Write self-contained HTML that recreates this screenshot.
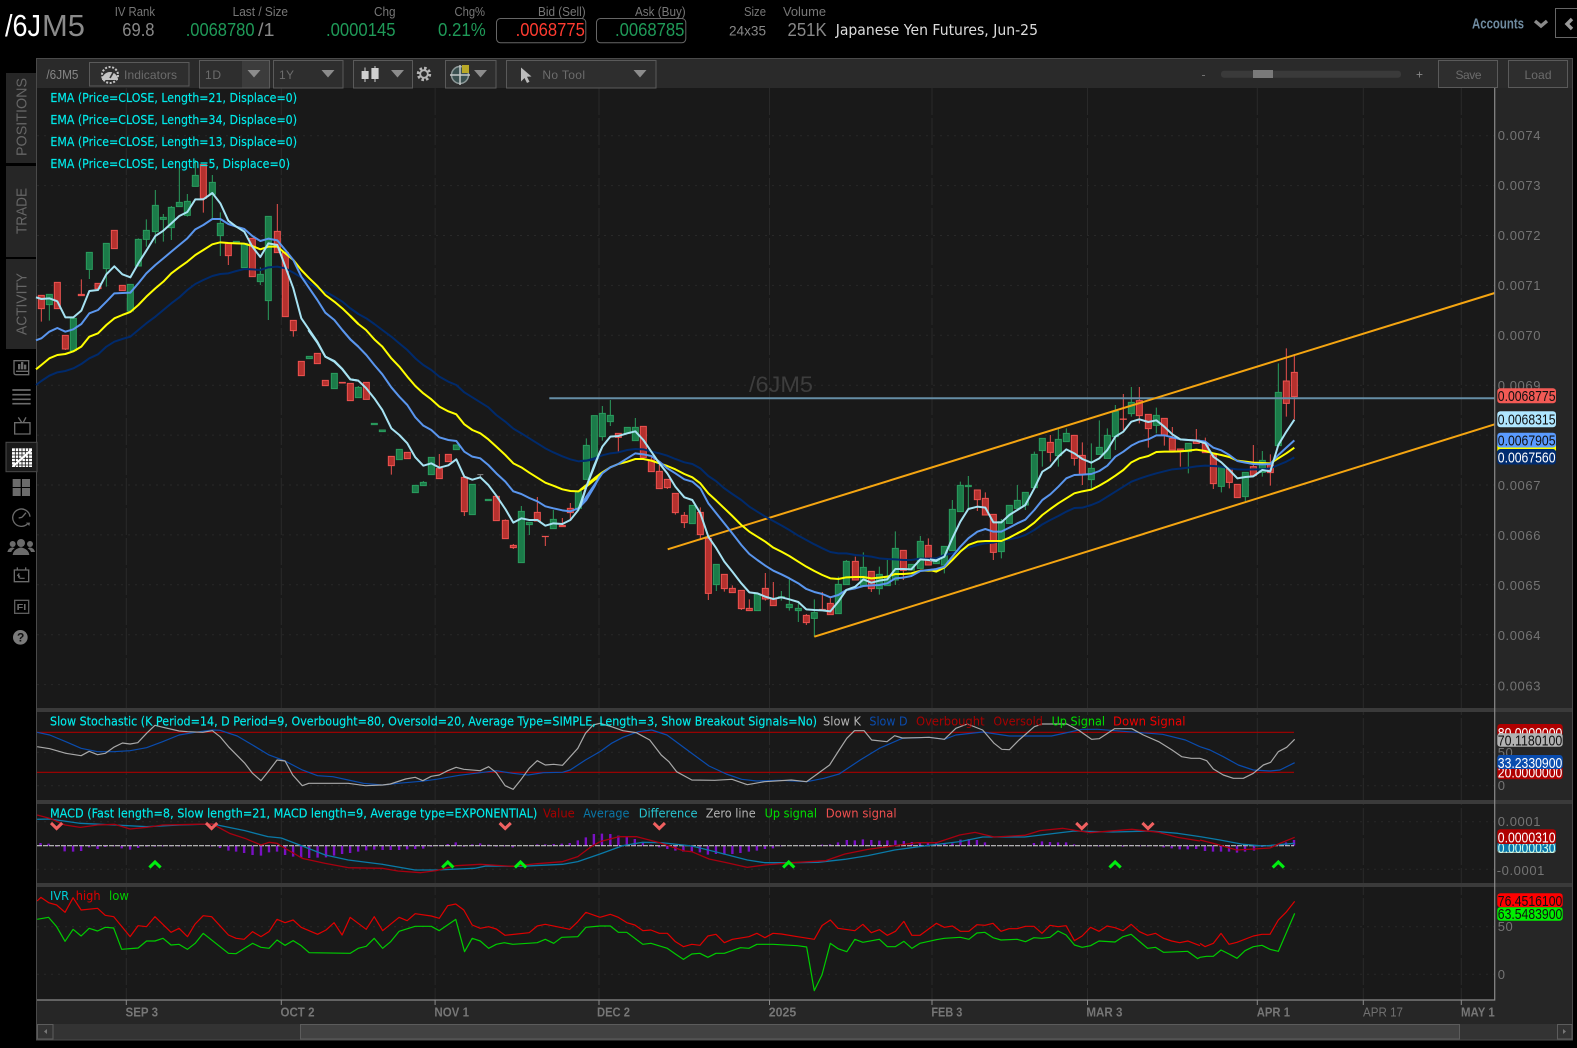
<!DOCTYPE html>
<html><head><meta charset="utf-8"><title>/6JM5</title>
<style>
html,body{margin:0;padding:0;background:#000;width:1577px;height:1048px;overflow:hidden}
svg{display:block;font-family:"Liberation Sans",sans-serif}
.g{fill:#1b7b49;stroke:#2a9c5e;stroke-width:3}
.r{fill:#b5312e;stroke:#ee5350;stroke-width:3}
.wg{fill:none;stroke:#2a9c5e;stroke-width:3}
.wr{fill:none;stroke:#e8504c;stroke-width:3}
.e5,.e13,.e21,.e34{fill:none;stroke-width:6;stroke-linejoin:round}
.e5{stroke:#a6e2f2}.e13{stroke:#5a96ee}.e21{stroke:#ffff00}.e34{stroke:#002a6c}
.n{fill:none;vector-effect:non-scaling-stroke;stroke-linejoin:round}
.leg{font-family:"DejaVu Sans",sans-serif;font-size:12.5px;fill:#00ecec}
.lab{font-size:12.5px;fill:#777}
.val{font-size:18px;fill:#888}
.ax{font-size:13px;fill:#747474}
.tag{font-size:15px}
.dt{font-size:13px;font-weight:bold;fill:#767676}
.ic{fill:none;stroke:#6b6b6b;stroke-width:4}
.tb{font-size:12px;fill:#6c6c6c}
.gh{stroke:#292929;stroke-width:1;stroke-dasharray:2 5;fill:none}
.gv{stroke:#292929;stroke-width:1;stroke-dasharray:27 3;fill:none}
</style></head><body>
<svg width="1577" height="1048" viewBox="0 0 1577 1048" xmlns="http://www.w3.org/2000/svg">
<rect width="1577" height="1048" fill="#000"/>

<!-- header -->
<text x="5" y="36" font-size="31" fill="#fff" textLength="36" lengthAdjust="spacingAndGlyphs">/6J</text>
<text x="42" y="36" font-size="31" fill="#8a8a8a" textLength="43" lengthAdjust="spacingAndGlyphs">M5</text>
<text class="lab" x="114.7" y="16" textLength="40.3" lengthAdjust="spacingAndGlyphs">IV Rank</text>
<text class="val" x="122.3" y="36" textLength="32.2" lengthAdjust="spacingAndGlyphs">69.8</text>
<text class="lab" x="232.6" y="16" textLength="55.4" lengthAdjust="spacingAndGlyphs">Last / Size</text>
<text class="val" x="185.7" y="36" textLength="68.8" lengthAdjust="spacingAndGlyphs" style="fill:#1f9a58">.0068780</text>
<text class="val" x="258" y="36" textLength="16.5" lengthAdjust="spacingAndGlyphs">/1</text>
<text class="lab" x="374" y="16" textLength="21.5" lengthAdjust="spacingAndGlyphs">Chg</text>
<text class="val" x="326" y="36" textLength="69.5" lengthAdjust="spacingAndGlyphs" style="fill:#1f9a58">.0000145</text>
<text class="lab" x="454.5" y="16" textLength="30.5" lengthAdjust="spacingAndGlyphs">Chg%</text>
<text class="val" x="438" y="36" textLength="47.7" lengthAdjust="spacingAndGlyphs" style="fill:#1f9a58">0.21%</text>
<text class="lab" x="538" y="16" textLength="47.7" lengthAdjust="spacingAndGlyphs">Bid (Sell)</text>
<rect x="496.5" y="18.5" width="89.3" height="24.3" rx="4" fill="#000" stroke="#666"/>
<text class="val" x="515.6" y="36" textLength="69.2" lengthAdjust="spacingAndGlyphs" style="fill:#ff3b30">.0068775</text>
<text class="lab" x="635" y="16" textLength="50.7" lengthAdjust="spacingAndGlyphs">Ask (Buy)</text>
<rect x="596.5" y="18.5" width="89.3" height="24.3" rx="4" fill="#000" stroke="#666"/>
<text class="val" x="615" y="36" textLength="69.4" lengthAdjust="spacingAndGlyphs" style="fill:#1f9a58">.0068785</text>
<text class="lab" x="744" y="16" textLength="22" lengthAdjust="spacingAndGlyphs">Size</text>
<text x="729" y="35.5" font-size="14" fill="#888" textLength="37" lengthAdjust="spacingAndGlyphs">24x35</text>
<text class="lab" x="783" y="16" textLength="43" lengthAdjust="spacingAndGlyphs">Volume</text>
<text class="val" x="787.5" y="36" textLength="39.2" lengthAdjust="spacingAndGlyphs">251K</text>
<text x="835.7" y="35" font-size="15" fill="#ddd" style="font-family:'DejaVu Sans',sans-serif" textLength="202.3" lengthAdjust="spacingAndGlyphs">Japanese Yen Futures, Jun-25</text>
<text x="1472" y="28.5" font-size="15" font-weight="bold" fill="#6f8ba0" textLength="52" lengthAdjust="spacingAndGlyphs">Accounts</text>
<path d="M1535 21l6 5 6-5" fill="none" stroke="#8a8a8a" stroke-width="3.4"/>
<rect x="1555.5" y="8.5" width="30" height="29" fill="none" stroke="#666"/>
<path d="M1572 19l-5 5 5 5" fill="none" stroke="#9a9a9a" stroke-width="3.4"/>

<!-- sidebar tabs -->
<rect x="6" y="73" width="31" height="90" fill="#262626"/>
<rect x="6" y="166" width="31" height="91" fill="#262626"/>
<rect x="6" y="259" width="31" height="90" fill="#262626"/>
<text transform="translate(26.5 156) rotate(-90)" font-size="15" fill="#666" textLength="78" lengthAdjust="spacingAndGlyphs">POSITIONS</text>
<text transform="translate(26.5 234) rotate(-90)" font-size="15" fill="#666" textLength="46" lengthAdjust="spacingAndGlyphs">TRADE</text>
<text transform="translate(26.5 335) rotate(-90)" font-size="15" fill="#666" textLength="62" lengthAdjust="spacingAndGlyphs">ACTIVITY</text>

<!-- frame -->
<rect x="36.5" y="58.5" width="1536" height="981.5" fill="#262626" stroke="#4a4a4a"/>
<rect x="37" y="59" width="1535" height="29" fill="#2a2a2a"/>
<rect x="37" y="88" width="1457.7" height="912" fill="#191919"/>

<!-- grid -->
<path class="gh" d="M37 135.7H1494M37 185.6H1494M37 235.5H1494M37 285.4H1494M37 335.3H1494M37 385.2H1494M37 435.1H1494M37 485H1494M37 534.9H1494M37 584.8H1494M37 634.7H1494M37 684.6H1494M37 752.3H1494M37 785.7H1494M37 821.7H1494M37 869.3H1494M37 926.7H1494M37 974.3H1494"/>
<path class="gv" d="M126.3 88V1000M281.3 88V1000M435.1 88V1000M599 88V1000M769.5 88V1000M932 88V1000M1087.5 88V1000M1257.3 88V1000M1363.3 88V1000M1461.3 88V1000"/>

<!-- toolbar -->
<text x="46.4" y="79" font-size="12.5" fill="#868686" textLength="32" lengthAdjust="spacingAndGlyphs">/6JM5</text>
<rect x="89.5" y="62.5" width="99.5" height="23.5" fill="#2e2e2e" stroke="#5a5a5a"/>
<path d="M102 80a8 8 0 1 1 16 0z" fill="#c4c4c4"/>
<circle cx="110" cy="75" r="8" fill="none" stroke="#c4c4c4" stroke-width="2" stroke-dasharray="2 1.6"/>
<path d="M110 78l4-7" stroke="#333" stroke-width="1.6"/>
<text class="tb" x="124" y="79" textLength="53" lengthAdjust="spacing">Indicators</text>
<rect x="199.5" y="60.5" width="70" height="27.5" fill="#2e2e2e" stroke="#5a5a5a"/>
<rect x="242" y="61" width="27" height="26.5" fill="#3c3c3c"/>
<text class="tb" x="205" y="79" textLength="16" lengthAdjust="spacing">1D</text>
<path d="M247.5 70h13l-6.5 7.5z" fill="#8c8c8c"/>
<rect x="273.5" y="60.5" width="69.5" height="27.5" fill="#2e2e2e" stroke="#5a5a5a"/>
<text class="tb" x="279" y="79" textLength="15" lengthAdjust="spacing">1Y</text>
<path d="M321.5 70h13l-6.5 7.5z" fill="#8c8c8c"/>
<rect x="353.5" y="60.5" width="59" height="27.5" fill="#2e2e2e" stroke="#5a5a5a"/>
<path d="M365 67.500V82M375 66V82" stroke="#cfcfcf" stroke-width="1"/>
<path d="M361.600 71h7v8h-7zM371.400 68h7.200v11h-7.200z" fill="#cfcfcf"/>
<path d="M391 70h13l-6.5 7.5z" fill="#8c8c8c"/>
<circle cx="424" cy="74" r="5.5" fill="none" stroke="#b4b4b4" stroke-width="3.4" stroke-dasharray="2.4 1.9"/>
<circle cx="424" cy="74" r="3.8" fill="none" stroke="#b4b4b4" stroke-width="1.8"/>
<rect x="445.5" y="60.5" width="50.5" height="27.5" fill="#2e2e2e" stroke="#5a5a5a"/>
<circle cx="460" cy="75" r="8.5" fill="#3a5050" stroke="#8f9a9a" stroke-width="1.5"/>
<path d="M450 75h20M460 65v20" stroke="#c2c8c8" stroke-width="1.5"/>
<rect x="462" y="65" width="7" height="8" fill="#b8a828"/>
<path d="M474 70h13l-6.5 7.5z" fill="#8c8c8c"/>
<rect x="506.5" y="60.5" width="149.5" height="27.5" fill="#2e2e2e" stroke="#5a5a5a"/>
<path d="M521 67.5l0 14 3.5-3.500 2.500 5 2.500-1.200-2.500-5 4.500-.3z" fill="#bbb"/>
<text class="tb" x="542.4" y="79" textLength="42.6" lengthAdjust="spacing">No Tool</text>
<path d="M633.5 70h13l-6.5 7.5z" fill="#8c8c8c"/>
<text x="1201.5" y="78.5" font-size="12" fill="#777">-</text>
<rect x="1221" y="70.7" width="180" height="7" rx="3" fill="#3a3a3a"/>
<rect x="1253" y="70" width="20" height="8" fill="#7a7a7a"/>
<text x="1416" y="78.5" font-size="12" fill="#888">+</text>
<rect x="1438.5" y="60.5" width="59" height="27" fill="#2e2e2e" stroke="#5a5a5a"/>
<text class="tb" x="1455.5" y="79" textLength="26" lengthAdjust="spacing">Save</text>
<rect x="1508.5" y="60.5" width="59" height="27" fill="#2e2e2e" stroke="#5a5a5a"/>
<text class="tb" x="1524.5" y="79" textLength="27" lengthAdjust="spacing">Load</text>

<!-- watermark -->
<text x="749" y="392" font-size="22" fill="#3d3d3d" textLength="64" lengthAdjust="spacingAndGlyphs">/6JM5</text>

<!-- candles A -->
<g transform="translate(36 160) scale(.33333)">
<path class="wg" d="M40 403V482M160 328V357M211 326V380M307 235V238M331 178V260M358 90V250M382 162V245M406 138V240M430 20V127M454 102V170M478 0V46M529 45V178M553 157V288M673 322V375M697 422V480"/>
<path class="wr" d="M16 446V485M88 567V570M136 358V403M502 115V158M577 287V315M724 132V214M772 512V530"/>
<path class="g" d="M31 403h18V434h-18zM103 475h18V572h-18zM151 277h18V328h-18zM202 250h18V326h-18zM274 373h18V453h-18zM298 238h18V318h-18zM322 211h18V238h-18zM349 136h18V215h-18zM373 172h18V178h-18zM397 142h18V203h-18zM421 127h18V140h-18zM445 124h18V166h-18zM469 46h18V79h-18zM520 67h18V103h-18zM544 190h18V227h-18zM592 244h18V250h-18zM616 250h18V323h-18zM664 343h18V365h-18zM688 169h18V422h-18zM811 589h18V596h-18zM886 640h18V686h-18z"/>
<path class="r" d="M7 406h18V446h-18zM55 367h18V446h-18zM79 526h18V567h-18zM127 403h18V407h-18zM177 370h18V386h-18zM226 211h18V266h-18zM250 376h18V392h-18zM493 14h18V115h-18zM568 250h18V287h-18zM640 235h18V350h-18zM715 214h18V278h-18zM739 277h18V470h-18zM763 481h18V512h-18zM787 604h18V647h-18zM835 580h18V611h-18zM859 661h18V677h-18zM910 667h18V669h-18zM934 670h18V722h-18z"/>
</g>
<!-- candles B -->
<g transform="translate(280 330) scale(.33333)">
<path class="wg" d="M235 168V172M724 528V544M748 584V615M820 540V568M430 453V457"/>
<path class="wr" d="M334 407V434M478 372V416M553 545V558M676 568V571M700 642V657M772 501V547M796 620V648M847 564V586M871 519V568"/>
<path d="M592 434H610M601 434V440" stroke="#888" stroke-width="3" fill="none"/>
<path class="g" d="M226 172h18V203h-18zM274 280h18V284h-18zM298 300h18V305h-18zM349 358h18V389h-18zM397 466h18V488h-18zM421 457h18V467h-18zM445 382h18V434h-18zM520 345h18V359h-18zM568 463h18V554h-18zM616 508h18V512h-18zM715 544h18V698h-18zM739 577h18V584h-18zM811 568h18V596h-18zM886 484h18V535h-18z"/>
<path class="r" d="M250 157h18V208h-18zM325 379h18V407h-18zM373 367h18V386h-18zM469 416h18V446h-18zM496 373h18V395h-18zM544 442h18V545h-18zM640 499h18V572h-18zM667 571h18V626h-18zM691 646h18V653h-18zM763 547h18V573h-18zM838 586h18V590h-18zM862 535h18V548h-18zM787 619h18V620h-18z"/>
</g>
<!-- candles C -->
<g transform="translate(580 390) scale(.33333)">
<path class="wg" d="M19 145V166M67 48V70M67 140V152M91 30V76M91 95V108M166 84V112M409 584V603M604 603V632M628 568V643M628 653V662M655 640V655M655 662V696M703 628V668M703 685V740M775 560V583M799 510V514M850 487V532M898 530V553M898 596V614M922 505V560M946 424V475M946 570V585M1021 438V454"/>
<path class="wr" d="M115 142V185M214 195V210M238 225V244M262 293V297M286 368V374M313 366V376M313 398V414M361 352V367M361 434V445M385 610V630M433 596V605M457 586V595M484 656V660M508 628V655M556 549V595M556 627V632M580 576V627M679 672V676M679 698V705M727 606V658M751 620V640M826 500V514M874 596V606M970 541V570M1045 445V466"/>
<path class="g" d="M10 166h18V268h-18zM34 77h18V205h-18zM58 70h18V140h-18zM82 76h18V95h-18zM133 112h18V130h-18zM157 112h18V152h-18zM328 346h18V401h-18zM400 523h18V584h-18zM523 612h18V662h-18zM595 620h18V622h-18zM619 643h18V653h-18zM646 655h18V662h-18zM694 668h18V685h-18zM766 583h18V671h-18zM790 514h18V584h-18zM841 532h18V587h-18zM889 553h18V596h-18zM913 560h18V587h-18zM937 475h18V570h-18zM985 523h18V540h-18zM1012 454h18V535h-18z"/>
<path class="r" d="M106 130h18V142h-18zM181 109h18V202h-18zM205 210h18V245h-18zM229 244h18V296h-18zM253 268h18V293h-18zM277 310h18V368h-18zM304 376h18V398h-18zM352 367h18V434h-18zM376 445h18V610h-18zM424 553h18V596h-18zM448 595h18V608h-18zM475 601h18V656h-18zM499 655h18V662h-18zM547 595h18V627h-18zM571 627h18V647h-18zM670 676h18V698h-18zM718 658h18V660h-18zM742 640h18V674h-18zM817 514h18V570h-18zM865 544h18V596h-18zM961 481h18V541h-18zM1036 466h18V525h-18z"/>
</g>
<!-- candles D -->
<g transform="translate(930 375) scale(.33333)">
<path class="wg" d="M43 570V595M67 375V403M91 320V331M115 303V400M214 530V550M214 432V440M262 330V376M286 390V405M313 230V238M337 227V275M385 160V193M385 242V275M409 160V175M484 205V280M484 314V340M508 136V217M532 160V181M556 90V109M556 185V225M604 36V82M604 116V125M679 98V121M679 151V175M775 230V295M874 334V352M946 365V378M997 228V256M997 292V305M1045 -35V52"/>
<path class="wr" d="M142 374V408M166 352V370M190 532V555M361 180V202M361 232V260M433 250V272M457 202V241M457 298V330M580 57V165M628 36V77M628 122V145M655 161V218M703 180V212M727 156V190M751 226V275M799 162V195M826 188V205M850 326V342M898 322V340M970 210V275M1021 238V332M1069 -80V125M1093 -63V133"/>
<path class="g" d="M10 552h18V566h-18zM34 514h18V570h-18zM58 403h18V527h-18zM82 331h18V410h-18zM106 331h18V335h-18zM205 440h18V530h-18zM229 391h18V445h-18zM253 376h18V400h-18zM277 352h18V390h-18zM304 238h18V338h-18zM328 190h18V227h-18zM376 193h18V242h-18zM400 175h18V200h-18zM475 280h18V314h-18zM499 217h18V238h-18zM523 181h18V250h-18zM547 109h18V185h-18zM595 82h18V116h-18zM670 121h18V151h-18zM766 205h18V230h-18zM865 275h18V334h-18zM937 292h18V365h-18zM988 256h18V292h-18zM1036 52h18V212h-18z"/>
<path class="r" d="M133 345h18V374h-18zM157 370h18V420h-18zM181 418h18V532h-18zM352 202h18V232h-18zM424 181h18V250h-18zM448 241h18V298h-18zM571 132h18V133h-18zM619 77h18V122h-18zM646 118h18V161h-18zM694 130h18V180h-18zM718 190h18V225h-18zM742 222h18V226h-18zM790 195h18V205h-18zM817 205h18V233h-18zM841 240h18V326h-18zM889 282h18V322h-18zM913 328h18V368h-18zM961 275h18V302h-18zM1012 270h18V293h-18zM1060 18h18V85h-18zM1084 -8h18V65h-18z"/>
</g>

<!-- horizontal + channels -->
<path d="M549.3 398.3H1494.7" stroke="#668ea6" stroke-width="2"/>
<path d="M667.7 549.3L1494.7 293" stroke="#f5a511" stroke-width="2" fill="none"/>
<path d="M814.3 636.7L1494.7 424.3" stroke="#f5a511" stroke-width="2" fill="none"/>

<!-- EMA lines A -->
<g transform="translate(36 160) scale(.33333)">
<polyline class="e34" points="0,675 16,663 40,647 64,637 88,633 112,625 136,612 160,595 186,583 211,560 235,545 259,537 283,530 307,510 331,490 358,470 382,450 406,430 430,412 454,390 478,372 502,360 529,348 553,342 577,340 601,333 625,327 649,328 673,330 697,322 724,320 748,325 772,338 796,352 820,368 844,385 868,395 895,410 919,425 943,445 967,462"/>
<polyline class="e21" points="0,628 16,615 40,595 64,585 88,582 112,574 136,560 160,530 186,520 211,495 235,475 259,465 283,456 307,435 331,410 358,385 382,365 406,340 430,322 454,305 478,285 502,270 529,253 553,247 577,249 601,250 625,251 649,258 673,268 697,260 724,260 748,280 772,300 796,330 820,355 844,378 868,405 895,425 919,445 943,468 967,492"/>
<polyline class="e13" points="0,541 16,535 40,515 64,504 88,515 112,508 136,492 160,460 186,450 211,425 235,400 259,399 283,398 307,370 331,340 358,315 382,295 406,275 430,255 454,235 478,208 502,195 529,177 553,177 577,192 601,200 625,207 649,228 673,243 697,236 724,241 748,270 772,300 796,350 820,385 844,420 868,458 895,480 919,510 943,538 967,560"/>
<polyline class="e5" points="0,412 16,417 40,415 64,424 88,472 112,472 136,452 160,393 186,390 211,343 235,319 259,343 283,352 307,310 331,272 358,228 382,212 406,190 430,168 454,156 478,118 502,118 529,99 553,130 577,182 601,200 625,215 649,260 673,291 697,250 724,255 748,320 772,385 796,475 820,510 844,545 868,590 895,603 919,627 943,658 967,662"/>
</g>
<!-- EMA lines B -->
<g transform="translate(280 330) scale(.33333)">
<polyline class="e34" points="211,-65 235,-48 259,-35 283,-18 307,0 334,20 358,40 382,60 406,85 430,105 454,120 478,140 505,155 529,165 553,187 577,202 601,217 625,232 649,255 676,275 700,296 724,310 748,325 772,340 796,355 820,367 847,379 871,388 895,394 919,392 943,388 960,382"/>
<polyline class="e21" points="211,-42 235,-18 258,0 283,28 307,50 334,85 358,110 382,140 406,168 430,190 454,208 478,230 505,244 529,253 553,283 577,300 601,310 625,328 649,350 676,375 700,400 724,412 748,428 772,443 796,458 820,467 847,478 871,483 895,484 919,470 943,450 960,438"/>
<polyline class="e13" points="187,0 211,28 235,50 259,75 283,105 307,133 334,172 358,200 382,225 406,262 430,287 454,300 478,322 505,330 529,333 553,365 577,380 601,385 625,405 649,430 676,455 700,484 724,492 748,504 772,514 796,529 820,535 847,541 871,544 895,535 919,510 943,470 960,437"/>
<polyline class="e5" points="85,0 112,38 136,80 163,95 187,118 211,148 235,152 259,175 283,205 307,240 334,295 358,315 382,340 406,382 430,407 454,400 478,413 505,406 529,388 553,440 577,449 601,442 625,465 649,497 676,537 700,578 724,565 748,570 772,570 796,587 820,580 847,582 871,570 895,540 919,470 943,410 960,365"/>
</g>
<!-- EMA lines C -->
<g transform="translate(580 390) scale(.33333)">
<polyline class="e34" points="0,213 19,212 43,205 67,196 91,190 115,187 142,180 166,177 190,178 214,185 238,190 262,197 286,207 313,217 337,222 361,235 385,258 409,274 433,295 457,312 484,330 508,350 532,365 556,380 580,393 604,406 628,420 655,437 679,450 703,463 727,475 751,486 775,490 799,490 826,495 850,497 874,500 898,505 922,507 946,508 970,510 994,510 1021,506 1045,506 1069,505"/>
<polyline class="e21" points="0,300 19,285 43,265 67,247 91,232 115,222 142,215 166,207 190,207 214,212 238,220 262,228 286,238 313,252 337,262 361,280 385,310 409,332 433,355 457,378 484,405 508,425 532,440 556,455 580,473 604,485 628,498 655,515 679,530 703,543 727,555 751,565 775,567 799,562 826,561 850,561 874,565 898,563 922,560 946,552 970,552 994,550 1021,542 1045,542 1069,541 1080,537"/>
<polyline class="e13" points="0,352 19,320 43,285 67,250 91,232 115,222 142,205 166,190 190,193 214,198 238,215 262,235 286,250 313,268 337,275 361,295 385,340 409,370 433,400 457,430 484,465 508,492 532,510 556,527 580,542 604,553 628,565 655,580 679,597 703,606 727,612 751,622 775,615 799,600 826,595 850,588 874,586 898,585 922,580 946,565 970,563 994,558 1021,543 1045,540 1069,538 1080,535"/>
<polyline class="e5" points="0,352 19,290 43,225 67,170 91,140 115,138 142,130 166,124 190,150 214,185 238,220 262,250 286,290 313,322 337,330 361,370 385,440 409,475 433,515 457,545 484,580 508,607 532,610 556,620 580,627 604,622 628,628 655,636 679,658 703,660 727,661 751,664 775,635 799,600 826,590 850,568 874,578 898,572 922,568 946,537 970,537 994,538 1021,508 1045,510 1069,513 1080,505"/>
</g>
<!-- EMA lines D -->
<g transform="translate(930 375) scale(.33333)">
<polyline class="e34" points="0,555 19,550 43,540 67,535 91,525 115,518 142,510 166,505 190,503 214,497 238,493 262,488 286,480 313,465 337,448 361,435 385,423 409,410 433,399 457,398 484,390 508,380 532,365 556,350 580,335 604,320 628,311 655,302 679,295 703,289 727,283 751,281 775,278 799,274 826,272 850,273 874,275 898,280 922,283 946,284 970,283 997,283 1021,280 1045,270 1069,260 1093,247"/>
<polyline class="e21" points="0,585 19,590 43,578 67,555 91,530 115,510 142,500 166,498 190,498 214,498 238,488 262,475 286,463 313,443 337,420 361,402 385,385 409,370 433,355 457,349 484,344 508,332 532,318 556,302 580,285 604,262 628,250 655,243 679,231 703,230 727,230 751,229 775,227 799,224 826,228 850,235 874,240 898,246 922,257 946,260 970,263 997,264 1021,265 1045,250 1069,235 1093,218"/>
<polyline class="e13" points="0,585 19,582 43,575 67,545 91,515 115,490 142,470 166,462 190,470 214,470 238,458 262,445 286,434 313,405 337,375 361,358 385,335 409,310 433,300 457,299 484,297 508,288 532,272 556,245 580,230 604,212 628,200 655,193 679,181 703,181 727,187 751,193 775,195 799,196 826,200 850,218 874,226 898,240 922,258 946,263 970,267 997,268 1021,267 1045,240 1069,218 1093,196"/>
<polyline class="e5" points="0,553 19,556 43,545 67,490 91,440 115,402 142,395 166,398 190,442 214,442 238,420 262,405 286,390 313,340 337,290 361,275 385,245 409,223 433,235 457,252 484,263 508,250 532,225 556,185 580,170 604,140 628,133 655,141 679,136 703,155 727,178 751,193 775,195 799,197 826,205 850,245 874,262 898,285 922,310 946,306 970,304 997,285 1021,289 1045,210 1069,170 1093,134"/>
</g>

<!-- panel separators -->
<rect x="37" y="708" width="1535" height="4" fill="#3a3a3a"/>
<rect x="37" y="800" width="1535" height="4" fill="#3a3a3a"/>
<rect x="37" y="883" width="1535" height="4" fill="#3a3a3a"/>
<rect x="1495" y="88" width="77" height="620" fill="#262626"/>
<rect x="1495" y="712" width="77" height="88" fill="#262626"/>
<rect x="1495" y="804" width="77" height="79" fill="#262626"/>
<rect x="1495" y="887" width="77" height="113" fill="#262626"/>
<path d="M1494.7 88V1000H37" fill="none" stroke="#8a8a8a" stroke-width="1.2"/>

<!-- Stochastic -->
<path d="M37 732.3H1294M37 772.3H1294" stroke="#a80000" stroke-width="1.2"/>
<g transform="translate(0 700) scale(.38265 .33333)">
<polyline class="n" stroke="#0a4cae" stroke-width="1.2" points="97,97 130,105 172,125 212,145 255,155 297,155 340,152 383,143 425,125 468,105 510,97 555,90 575,91 620,108 660,135 703,165 745,183 790,210 830,227 870,230 910,240 950,250 1000,255 1040,250 1100,244 1140,238 1200,226 1255,218 1297,212 1340,220 1380,225 1420,218 1470,217 1490,210 1530,180 1568,155"/>
<polyline class="n" stroke="#a8a8a8" stroke-width="1.2" points="97,140 130,146 172,160 212,167 233,154 255,164 275,160 297,142 320,129 340,132 360,128 383,100 405,76 426,82 468,93 490,95 530,97 555,92 575,110 597,140 640,190 660,220 682,242 703,212 724,180 745,183 765,225 790,257 807,250 850,250 910,250 955,257 1000,255 1020,252 1060,237 1085,232 1105,242 1127,229 1148,225 1170,212 1192,202 1212,208 1255,212 1277,200 1297,218 1320,257 1341,268 1362,238 1383,205 1404,182 1425,195 1447,193 1470,196 1510,145 1530,100 1550,75 1568,70"/>
</g>
<g transform="translate(600 700) scale(.38265 .33333)">
<polyline class="n" stroke="#0a4cae" stroke-width="1.2" points="0,155 30,130 60,112 100,95 135,90 175,105 240,160 285,198 330,222 370,238 410,243 470,241 540,245 585,235 625,222 680,180 730,145 790,115 830,113 860,112 900,118 930,105 1000,96 1070,108 1180,108 1260,88 1300,88 1380,95 1470,103 1530,120 1568,140"/>
<polyline class="n" stroke="#a8a8a8" stroke-width="1.2" points="0,70 30,80 60,92 95,98 130,120 160,165 180,185 200,215 240,240 300,241 345,238 385,254 430,245 500,240 540,245 570,220 600,195 625,150 645,115 665,92 690,92 710,120 750,125 770,107 790,114 830,113 860,112 900,118 930,85 960,72 1000,90 1030,130 1050,148 1070,149 1095,120 1135,80 1155,72 1220,72 1250,90 1285,118 1305,116 1345,86 1390,86 1420,105 1460,125 1495,150 1520,170 1545,175 1568,175"/>
</g>
<g transform="translate(1200 700) scale(.33333)">
<polyline class="n" stroke="#0a4cae" stroke-width="1.2" points="0,140 30,150 70,170 115,195 160,210 210,213 240,210 284,188"/>
<polyline class="n" stroke="#a8a8a8" stroke-width="1.2" points="0,175 20,182 40,207 70,225 100,235 130,235 160,220 190,195 212,187 235,155 260,142 284,118"/>
</g>

<!-- MACD -->
<g transform="translate(0 700) scale(.38265 .33333)">
<path class="n" stroke="#7a10c4" stroke-width="2.4" d="M106 437v-8M127 437v-6M148 437v3M169 437v17M191 437v18M212 437v16M233 437v5M255 437v10M275 437v4M297 437v2M318 437v8M340 437v12M361 437v7M383 437v3M405 437v3M426 437v2M447 437v2M468 437v2M490 437v1M510 437v1M531 437v1M553 437v2M575 437v7M597 437v15M617 437v18M638 437v22M660 437v28M682 437v30M703 437v20M724 437v18M745 437v28M766 437v33M787 437v37M808 437v37M830 437v36M852 437v35M873 437v30M894 437v25M915 437v22M936 437v18M957 437v14M978 437v12M1000 437v13M1021 437v13M1043 437v13M1064 437v11M1085 437v10M1106 437v9M1127 437v3M1148 437v1M1170 437v-5M1191 437v-10M1212 437v3M1234 437v-4M1255 437v-7M1277 437v-3M1297 437v3M1318 437v2M1340 437v5M1361 437v1M1383 437v-1M1404 437v-4M1425 437v-4M1447 437v-5M1468 437v-6M1489 437v-8M1510 437v-16M1531 437v-25M1552 437v-35"/>
</g>
<g transform="translate(600 700) scale(.38265 .33333)">
<path class="n" stroke="#7a10c4" stroke-width="2.4" d="M5 437v-36M27 437v-35M48 437v-30M70 437v-28M91 437v-20M112 437v-8M133 437v-3M155 437v5M176 437v10M197 437v15M218 437v18M240 437v18M261 437v20M282 437v27M303 437v25M325 437v27M346 437v25M367 437v22M389 437v18M410 437v15M431 437v10M452 437v8M474 437v2M495 437v1M516 437v1M538 437v1M559 437v-2M580 437v-3M601 437v-4M622 437v-10M645 437v-17M666 437v-16M687 437v-19M709 437v-17M730 437v-15M751 437v-16M772 437v-16M794 437v-14M815 437v-11M836 437v-10M857 437v-8M879 437v-7M900 437v-6M921 437v-7M942 437v-18M964 437v-20M985 437v-17M1006 437v-10M1027 437v-1M1048 437v-1M1069 437v-1M1090 437v-1M1112 437v-1M1134 437v-8M1155 437v-13M1176 437v-11M1197 437v-10M1218 437v-10M1239 437v-4M1260 437v1M1282 437v2M1304 437v2M1325 437v2M1346 437v1M1367 437v3M1388 437v-2M1410 437v2M1431 437v2M1452 437v2M1473 437v5M1494 437v8M1515 437v11M1536 437v11M1558 437v10"/>
</g>
<g transform="translate(1200 700) scale(.33333)">
<path class="n" stroke="#7a10c4" stroke-width="2.4" d="M15 437v16M39 437v18M63 437v18M87 437v18M111 437v21M135 437v18M162 437v15M186 437v4M210 437v1M235 437v-4M258 437v-10M282 437v-17"/>
</g>
<path d="M37 845.7H1294" stroke="#c4c4c4" stroke-width="1.2" stroke-dasharray="5 1"/>
<g transform="translate(0 700) scale(.38265 .33333)">
<polyline class="n" stroke="#0a7aa8" stroke-width="1.3" points="97,358 130,357 210,370 300,375 383,380 470,375 555,372 640,392 700,410 735,414 790,438 850,465 910,480 1000,493 1085,510 1140,510 1240,505 1270,498 1360,499 1470,493 1510,485 1568,462"/>
<polyline class="n" stroke="#a80010" stroke-width="1.3" points="97,345 130,355 170,375 210,382 255,375 300,373 340,387 383,382 425,375 510,373 555,372 600,400 640,415 682,435 703,427 724,430 745,445 790,475 850,490 910,503 1000,505 1040,513 1100,518 1140,512 1192,497 1255,493 1340,499 1404,491 1470,485 1510,470 1545,440 1568,425"/>
</g>
<g transform="translate(600 700) scale(.38265 .33333)">
<polyline class="n" stroke="#0a7aa8" stroke-width="1.3" points="0,462 60,437 110,427 160,428 240,438 300,455 385,480 430,488 500,488 570,487 640,478 700,467 770,450 860,436 940,425 1000,411 1110,411 1240,393 1340,396 1440,393 1510,400 1568,410"/>
<polyline class="n" stroke="#a80010" stroke-width="1.3" points="0,425 50,410 95,410 155,428 220,453 240,455 285,477 330,488 385,502 430,495 500,488 590,482 640,462 700,448 770,437 830,428 880,428 940,405 980,397 1030,411 1110,406 1150,392 1210,385 1280,398 1390,388 1460,397 1510,412 1568,423"/>
</g>
<g transform="translate(1200 700) scale(.33333)">
<polyline class="n" stroke="#0a7aa8" stroke-width="1.3" points="0,410 60,420 130,433 190,438 284,430"/>
<polyline class="n" stroke="#a80010" stroke-width="1.3" points="0,420 40,430 110,450 160,447 210,444 235,432 284,412"/>
</g>
<path fill="none" stroke="#f06060" stroke-width="3" d="M51 823l5.6 5.5 5.6-5.5M206 823l5.6 5.5 5.6-5.5M499.6 823l5.6 5.5 5.6-5.5M653.7 823l5.6 5.5 5.6-5.5M1076.2 823l5.6 5.5 5.6-5.5M1142.4 823l5.6 5.5 5.6-5.5"/>
<path fill="none" stroke="#00ee10" stroke-width="3" d="M149.4 867.5l5.6-5.5 5.6 5.5M442.2 867.5l5.6-5.5 5.6 5.5M514.9 867.5l5.6-5.5 5.6 5.5M783.1 867.5l5.6-5.5 5.6 5.5M1109.5 867.5l5.6-5.5 5.6 5.5M1272.7 867.5l5.6-5.5 5.6 5.5"/>

<!-- IVR -->
<g transform="translate(0 700) scale(.38265 .33333)">
<polyline class="n" stroke="#e00000" stroke-width="1.2" points="97,603 107,592 127,608 148,615 170,637 191,593 212,630 255,625 275,646 297,650 340,710 361,677 383,680 405,650 447,697 468,685 490,710 510,672 531,647 553,650 597,705 617,715 638,718 660,695 682,710 703,695 724,658 745,668 766,660 787,682 830,703 852,690 873,668 894,705 915,652 957,688 978,650 1000,692 1043,652 1064,662 1085,641 1127,648 1148,655 1170,617 1191,612 1212,630 1234,675 1255,685 1277,680 1297,687 1320,706 1383,698 1404,678 1425,673 1489,688 1510,665 1531,637 1568,652"/>
<polyline class="n" stroke="#00cc00" stroke-width="1.2" points="97,658 127,652 148,680 170,724 191,688 212,708 233,685 255,693 275,682 297,684 318,748 361,744 383,723 405,723 426,715 447,735 468,733 490,748 510,730 531,700 597,760 617,761 660,730 682,742 703,745 724,720 745,736 766,722 787,737 808,758 915,760 936,745 957,739 978,715 1000,745 1021,725 1043,694 1085,679 1127,679 1148,692 1191,658 1214,755 1234,715 1255,723 1277,745 1297,733 1318,728 1340,733 1404,728 1425,718 1447,730 1468,712 1510,710 1531,682 1568,678"/>
</g>
<g transform="translate(600 700) scale(.38265 .33333)">
<polyline class="n" stroke="#e00000" stroke-width="1.2" points="0,652 27,643 48,652 70,668 91,675 112,692 133,690 155,700 176,700 197,725 218,740 240,733 261,736 282,708 303,703 325,728 346,718 389,710 410,700 431,713 452,700 474,702 516,710 560,718 580,677 602,660 622,685 666,692 687,673 709,698 730,689 751,706 772,694 794,664 815,706 836,706 879,670 900,682 921,678 942,694 964,694 985,674 1006,676 1027,670 1048,694 1069,686 1090,686 1112,679 1134,679 1155,700 1176,676 1197,680 1218,677 1240,722 1260,708 1282,682 1304,694 1325,678 1346,683 1367,692 1388,673 1410,695 1431,706 1452,700 1473,715 1494,723 1515,728 1536,723 1568,737"/>
<polyline class="n" stroke="#00cc00" stroke-width="1.2" points="0,678 27,678 48,697 70,697 91,715 112,733 133,730 176,745 197,762 218,778 240,762 261,760 282,772 303,760 325,760 367,743 389,745 410,733 452,733 516,737 540,741 560,872 580,825 602,730 622,746 645,755 666,718 687,727 730,718 751,740 772,740 794,724 815,745 836,730 879,719 900,715 942,712 964,718 985,699 1006,697 1027,713 1048,720 1090,718 1112,725 1134,713 1155,715 1176,712 1197,693 1218,705 1240,735 1260,742 1282,737 1304,723 1346,726 1367,710 1388,703 1431,745 1452,742 1473,757 1515,755 1536,754 1562,776 1568,772"/>
</g>
<g transform="translate(1200 700) scale(.33333)">
<polyline class="n" stroke="#e00000" stroke-width="1.2" points="0,730 15,740 40,730 63,700 87,733 111,727 160,708 186,703 210,703 235,660 258,637 284,604"/>
<polyline class="n" stroke="#00cc00" stroke-width="1.2" points="0,772 20,769 40,769 63,750 87,762 111,775 135,752 160,740 186,736 210,748 235,754 284,640"/>
</g>

<!-- legends -->
<g class="leg" stroke="#00ecec" stroke-width=".15">
<text x="50.4" y="102" textLength="246.6" lengthAdjust="spacingAndGlyphs">EMA (Price=CLOSE, Length=21, Displace=0)</text>
<text x="50.4" y="124" textLength="246.6" lengthAdjust="spacingAndGlyphs">EMA (Price=CLOSE, Length=34, Displace=0)</text>
<text x="50.4" y="146" textLength="246.6" lengthAdjust="spacingAndGlyphs">EMA (Price=CLOSE, Length=13, Displace=0)</text>
<text x="50.4" y="168" textLength="239.6" lengthAdjust="spacingAndGlyphs">EMA (Price=CLOSE, Length=5, Displace=0)</text>
<text x="50" y="725.3" textLength="767" lengthAdjust="spacingAndGlyphs">Slow Stochastic (K Period=14, D Period=9, Overbought=80, Oversold=20, Average Type=SIMPLE, Length=3, Show Breakout Signals=No)</text>
<text x="50" y="817.3" textLength="487.3" lengthAdjust="spacingAndGlyphs">MACD (Fast length=8, Slow length=21, MACD length=9, Average type=EXPONENTIAL)</text>
</g>
<text class="leg" x="823" y="725.3" style="fill:#b4b4b4" textLength="38" lengthAdjust="spacingAndGlyphs">Slow K</text>
<text class="leg" x="869.4" y="725.3" style="fill:#0a4cae" textLength="38.2" lengthAdjust="spacingAndGlyphs">Slow D</text>
<text class="leg" x="916" y="725.3" style="fill:#a80000" textLength="68.6" lengthAdjust="spacingAndGlyphs">Overbought</text>
<text class="leg" x="993.4" y="725.3" style="fill:#a80000" textLength="49.4" lengthAdjust="spacingAndGlyphs">Oversold</text>
<text class="leg" x="1051.6" y="725.3" style="fill:#00e000" textLength="53.4" lengthAdjust="spacingAndGlyphs">Up Signal</text>
<text class="leg" x="1113" y="725.3" style="fill:#f00000" textLength="72.5" lengthAdjust="spacingAndGlyphs">Down Signal</text>
<text class="leg" x="543" y="817.3" style="fill:#a80000" textLength="31.8" lengthAdjust="spacingAndGlyphs">Value</text>
<text class="leg" x="583.2" y="817.3" style="fill:#0a78a8" textLength="46.3" lengthAdjust="spacingAndGlyphs">Average</text>
<text class="leg" x="638.7" y="817.3" style="fill:#28c4d0" textLength="58.9" lengthAdjust="spacingAndGlyphs">Difference</text>
<text class="leg" x="705.7" y="817.3" style="fill:#b4b4b4" textLength="50" lengthAdjust="spacingAndGlyphs">Zero line</text>
<text class="leg" x="764.6" y="817.3" style="fill:#00e000" textLength="52.4" lengthAdjust="spacingAndGlyphs">Up signal</text>
<text class="leg" x="825.8" y="817.3" style="fill:#f05050" textLength="70.8" lengthAdjust="spacingAndGlyphs">Down signal</text>
<text class="leg" x="50" y="900" style="fill:#00d0d8" textLength="19" lengthAdjust="spacingAndGlyphs">IVR</text>
<text class="leg" x="75.8" y="900" style="fill:#e00000" textLength="24.8" lengthAdjust="spacingAndGlyphs">high</text>
<text class="leg" x="109" y="900" style="fill:#00d000" textLength="20" lengthAdjust="spacingAndGlyphs">low</text>

<!-- price axis -->
<g class="ax" letter-spacing=".6">
<text x="1497.7" y="140">0.0074</text><text x="1497.7" y="190">0.0073</text><text x="1497.7" y="240">0.0072</text><text x="1497.7" y="290">0.0071</text><text x="1497.7" y="340">0.0070</text><text x="1497.7" y="390">0.0069</text><text x="1497.7" y="490">0.0067</text><text x="1497.7" y="540">0.0066</text><text x="1497.7" y="590">0.0065</text><text x="1497.7" y="640">0.0064</text><text x="1497.7" y="690.5">0.0063</text>
<text x="1497.7" y="757">50</text><text x="1497.7" y="790">0</text>
<text x="1497.7" y="826">0.0001</text><text x="1496.7" y="875">-0.0001</text>
<text x="1497.7" y="931">50</text><text x="1497.7" y="979">0</text>
</g>
<!-- tags -->
<rect x="1497.3" y="388.3" width="58.7" height="15" rx="3" fill="#f25a55"/>
<text class="tag" x="1497.8" y="401.2" textLength="57.7" lengthAdjust="spacingAndGlyphs" fill="#111">0.0068775</text>
<rect x="1497.3" y="411.3" width="58.7" height="16" rx="3" fill="#afe6ff"/>
<text class="tag" x="1497.8" y="424.6" textLength="57.7" lengthAdjust="spacingAndGlyphs" fill="#111">0.0068315</text>
<rect x="1497.3" y="445" width="58.7" height="6" fill="#ffff00"/>
<rect x="1497.3" y="432.7" width="58.7" height="14.8" rx="3" fill="#5a9bff"/>
<text class="tag" x="1497.8" y="445.5" textLength="57.7" lengthAdjust="spacingAndGlyphs" fill="#111">0.0067905</text>
<rect x="1497.3" y="449" width="58.7" height="15.5" rx="3" fill="#002c70"/>
<text class="tag" x="1497.8" y="462.3" textLength="57.7" lengthAdjust="spacingAndGlyphs" fill="#fff">0.0067560</text>

<rect x="1497.3" y="724" width="65.4" height="12" rx="3" fill="#b00000"/>
<text class="tag" x="1497.8" y="738" textLength="64.5" lengthAdjust="spacingAndGlyphs" fill="#fff">80.0000000</text>
<rect x="1497.3" y="733.3" width="65.4" height="13.4" rx="3" fill="#b2b2b2"/>
<text class="tag" x="1497.8" y="745.5" textLength="64.5" lengthAdjust="spacingAndGlyphs" fill="#111">70.1180100</text>
<rect x="1497.3" y="766" width="65.4" height="13.3" rx="3" fill="#b00000"/>
<text class="tag" x="1497.8" y="777.5" textLength="64.5" lengthAdjust="spacingAndGlyphs" fill="#fff">20.0000000</text>
<rect x="1497.3" y="755" width="65.4" height="14" rx="3" fill="#0a4cae"/>
<text class="tag" x="1497.8" y="768" textLength="64.5" lengthAdjust="spacingAndGlyphs" fill="#fff">33.2330900</text>
<rect x="1497.3" y="842" width="58.7" height="11" rx="3" fill="#a8b8a8"/>
<rect x="1497.3" y="842" width="58.7" height="10" rx="3" fill="#0a78ab"/>
<text class="tag" x="1497.8" y="853" textLength="57.7" lengthAdjust="spacingAndGlyphs" fill="#cfe">0.0000030</text>
<rect x="1497.3" y="829.3" width="58.7" height="14.7" rx="3" fill="#b00000"/>
<text class="tag" x="1497.8" y="842.3" textLength="57.7" lengthAdjust="spacingAndGlyphs" fill="#fff">0.0000310</text>
<rect x="1497.3" y="893.3" width="65.4" height="14" rx="3" fill="#ff0000"/>
<text class="tag" x="1497.8" y="906" textLength="64.5" lengthAdjust="spacingAndGlyphs" fill="#111">76.4516100</text>
<rect x="1497.3" y="907.3" width="65.4" height="13.4" rx="3" fill="#00ee00"/>
<text class="tag" x="1497.8" y="919" textLength="64.5" lengthAdjust="spacingAndGlyphs" fill="#111">63.5483900</text>

<!-- date axis -->
<path d="M126.3 1000v5M281.3 1000v5M435.1 1000v5M599 1000v5M769.5 1000v5M932 1000v5M1087.5 1000v5M1257.3 1000v5M1363.3 1000v5M1461.3 1000v5" stroke="#8a8a8a"/>
<text class="dt" x="125.5" y="1016.7" textLength="32.5" lengthAdjust="spacingAndGlyphs">SEP 3</text>
<text class="dt" x="280.5" y="1016.7" textLength="34" lengthAdjust="spacingAndGlyphs">OCT 2</text>
<text class="dt" x="434.4" y="1016.7" textLength="34.6" lengthAdjust="spacingAndGlyphs">NOV 1</text>
<text class="dt" x="597" y="1016.7" textLength="33" lengthAdjust="spacingAndGlyphs">DEC 2</text>
<text class="dt" x="768.8" y="1016.7" textLength="27.5" lengthAdjust="spacingAndGlyphs">2025</text>
<text class="dt" x="931.4" y="1016.7" textLength="30.9" lengthAdjust="spacingAndGlyphs">FEB 3</text>
<text class="dt" x="1086.4" y="1016.7" textLength="36.1" lengthAdjust="spacingAndGlyphs">MAR 3</text>
<text class="dt" x="1256.7" y="1016.7" textLength="33.3" lengthAdjust="spacingAndGlyphs">APR 1</text>
<text x="1363" y="1016.7" font-size="13" fill="#707070" textLength="40" lengthAdjust="spacingAndGlyphs">APR 17</text>
<text class="dt" x="1461" y="1016.7" textLength="33.7" lengthAdjust="spacingAndGlyphs">MAY 1</text>

<!-- scrollbar -->
<rect x="37" y="1024" width="1535" height="15.5" fill="#333"/>
<rect x="300.5" y="1024.5" width="1159" height="14.5" fill="#424242" stroke="#5c5c5c"/>
<rect x="37.5" y="1024.5" width="15.5" height="14.5" fill="#333" stroke="#5c5c5c"/>
<path d="M47 1029v5l-3-2.5z" fill="#777"/>
<rect x="1557.5" y="1024.5" width="14.5" height="14.5" fill="#333" stroke="#5c5c5c"/>
<path d="M1563 1029v5l3-2.5z" fill="#777"/>

<!-- side icons -->
<rect x="6" y="442.3" width="31" height="29.4" fill="#1a1a1a" stroke="#4a4a4a"/>
<g transform="translate(0 340) scale(.33333)">
<path class="ic" d="M42 62h44v42H48q-6 0-6-6zM48 94h38"/>
<path d="M54 72h7v16h-7zM63 66h7v22h-7zM72 74h7v14h-7z" fill="#6b6b6b"/>
<path d="M37 150h55M37 164h55M37 178h55M37 191h55" stroke="#6b6b6b" stroke-width="5"/>
<path d="M44 248h46v34H44zM55 232l10 15M78 232l-8 15" class="ic"/>
<rect x="36" y="325" width="60" height="56" fill="#fff"/>
<path d="M36 335h60M36 345h60M36 355h60M36 365h60M36 375h60M46 325v56M56 325v56M66 325v56M76 325v56M86 325v56" stroke="#1a1a1a" stroke-width="2.500"/>
<path d="M40 378L94 330" stroke="#fff" stroke-width="6"/>
<path d="M38 417h24v24H38zM66 417h24v24H66zM38 444h24v24H38zM66 444h24v24H66z" fill="#6b6b6b"/>
<path class="ic" d="M82 552A26 26 0 1 1 90 530"/>
<path d="M66 532l12-14M66 532l-10 2" stroke="#6b6b6b" stroke-width="4"/>
<path d="M78 548l12 0-2 10z" fill="#6b6b6b"/>
<circle cx="63" cy="609" r="12" fill="#6b6b6b"/>
<path d="M38 645q2-18 25-23 23 5 25 23z" fill="#6b6b6b"/>
<circle cx="38" cy="612" r="9" fill="#6b6b6b"/>
<circle cx="90" cy="612" r="9" fill="#6b6b6b"/>
<path d="M22 636q2-12 16-14l6 3q-8 4-10 11zM105 636q-2-12-16-14l-6 3q8 4 10 11z" fill="#6b6b6b"/>
<path class="ic" d="M43 690h43v35H43zM52 682v8M77 682v8"/>
<path d="M74 715H62q-8-1-6-9l2-1M58 700l-5 6 7 4" fill="none" stroke="#6b6b6b" stroke-width="3.5"/>
<rect x="44" y="781" width="42" height="39" fill="none" stroke="#5e5e5e" stroke-width="4"/>
<text x="50" y="810" font-size="26" font-weight="bold" fill="#6b6b6b" textLength="29" lengthAdjust="spacingAndGlyphs">FI</text>
<circle cx="61" cy="892" r="22" fill="#7a7a7a"/>
<text x="51" y="905" font-size="36" font-weight="bold" fill="#111">?</text>
</g>
</svg>
</body></html>
